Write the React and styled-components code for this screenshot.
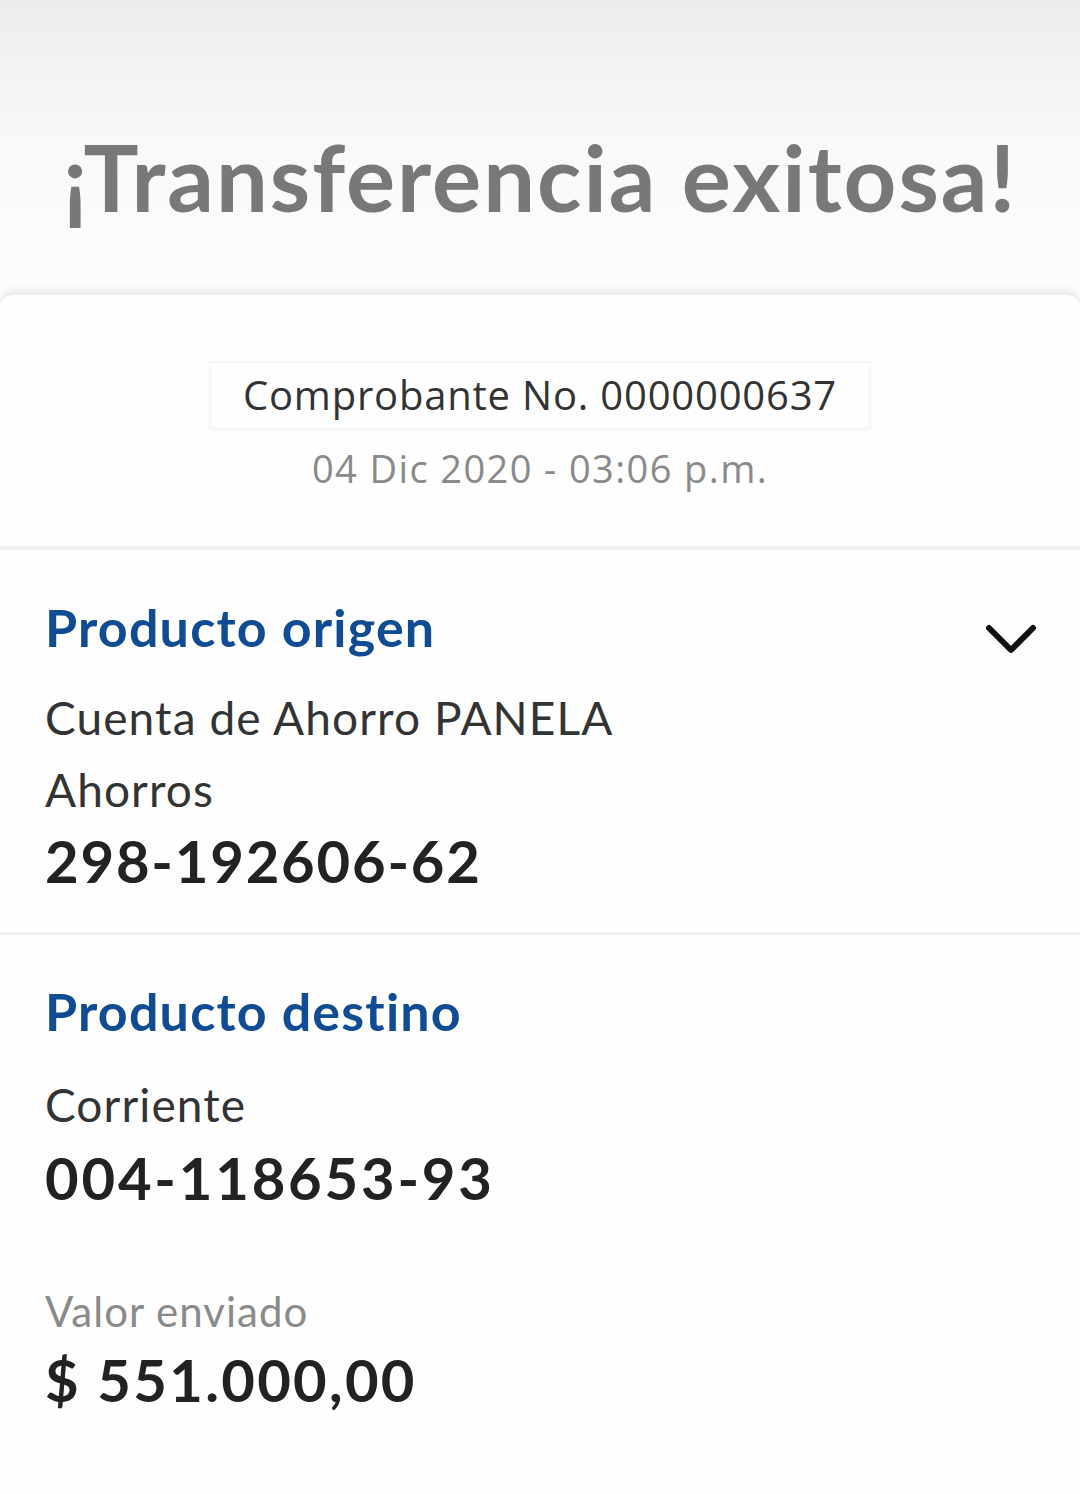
import styled, { createGlobalStyle } from "styled-components"

const Global = createGlobalStyle`
  html, body {
    margin: 0;
    padding: 0;
    background: #ffffff;
  }
  body {
    font-family: 'Lato', 'Open Sans', sans-serif;
  }
`

const Page = styled.div`
  width: 1080px;
  min-height: 1494px;
  background: #fdfdfd;
  overflow: hidden;
  display: flex;
  flex-direction: column;
`

const Header = styled.header`
  height: 292px;
  flex-shrink: 0;
  background: linear-gradient(180deg, #ececec 0%, #f8f8f8 45%, #fdfdfd 100%);
  display: flex;
  justify-content: center;
  padding-top: 122px;
  box-sizing: border-box;
`

const Title = styled.h1`
  margin: 0;
  font-family: 'Lato', sans-serif;
  font-weight: 700;
  font-size: 92px;
  line-height: 110px;
  color: #787878;
  letter-spacing: 2px;
`

const Card = styled.main`
  flex: 1;
  background: #fefefe;
  border-top-left-radius: 14px;
  border-top-right-radius: 14px;
  box-shadow: 0 -3px 6px rgba(0, 0, 0, 0.06);
  border-top: 3px solid #ededed;
`

const Receipt = styled.section`
  display: flex;
  flex-direction: column;
  align-items: center;
  padding: 66px 0 55px;
  border-bottom: 4px solid #efefef;
`

const Voucher = styled.div`
  padding: 10px 32px;
  border: 2px solid #f6f6f6;
  box-shadow: 0 1px 3px rgba(0, 0, 0, 0.04);
  font-size: 40px;
  line-height: 44px;
  color: #333;
  font-family: 'Open Sans', sans-serif;
  letter-spacing: 0.8px;
`

const Stamp = styled.div`
  margin-top: 16px;
  font-size: 38px;
  line-height: 46px;
  color: #8a8a8a;
  font-family: 'Open Sans', sans-serif;
  letter-spacing: 1.4px;
`

const Block = styled.section`
  padding: ${p => p.$pad || "44px 45px 38px"};
  border-bottom: ${p => (p.$line ? "3px solid #efefef" : "none")};
`

const HeadRow = styled.div`
  display: flex;
  align-items: center;
  justify-content: space-between;
`

const Heading = styled.h2`
  margin: 0;
  font-family: 'Lato', sans-serif;
  font-weight: 700;
  font-size: 52px;
  line-height: 60px;
  letter-spacing: 1.2px;
  color: #0f4c93;
`

const Chevron = styled.svg`
  width: 56px;
  height: 40px;
  margin-right: -4px;
  margin-top: 26px;
`

const Line = styled.div`
  margin-top: ${p => p.$top || "0"};
  font-family: 'Lato', sans-serif;
  font-size: ${p => (p.$bold ? "58px" : p.$muted ? "42px" : "46px")};
  font-weight: ${p => (p.$bold ? 700 : 400)};
  line-height: ${p => (p.$bold ? "66px" : "56px")};
  letter-spacing: ${p => p.$spacing || "1.1px"};
  color: ${p => (p.$muted ? "#8a8a8a" : p.$bold ? "#222" : "#333")};
`

const App = () => {
  return (
    <>
      <Global />
      <Page>
        <Header>
          <Title>¡Transferencia exitosa!</Title>
        </Header>
        <Card>
          <Receipt>
            <Voucher>Comprobante No. 0000000637</Voucher>
            <Stamp>04 Dic 2020 - 03:06 p.m.</Stamp>
          </Receipt>

          <Block $line>
            <HeadRow>
              <Heading>Producto origen</Heading>
              <Chevron viewBox="0 0 56 40">
                <path d="M6 8 L28 30 L50 8" fill="none" stroke="#111" strokeWidth="6" strokeLinecap="round" strokeLinejoin="round" />
              </Chevron>
            </HeadRow>
            <Line $top="30px">Cuenta de Ahorro PANELA</Line>
            <Line $top="16px">Ahorros</Line>
            <Line $bold $spacing="1.8px" $top="10px">298-192606-62</Line>
          </Block>

          <Block $pad="46px 45px 0">
            <Heading>Producto destino</Heading>
            <Line $top="36px">Corriente</Line>
            <Line $bold $spacing="2.8px" $top="12px">004-118653-93</Line>
            <Line $muted $spacing="1px" $top="72px">Valor enviado</Line>
            <Line $bold $spacing="2.3px" $top="8px">$ 551.000,00</Line>
          </Block>
        </Card>
      </Page>
    </>
  )
}

export default App
